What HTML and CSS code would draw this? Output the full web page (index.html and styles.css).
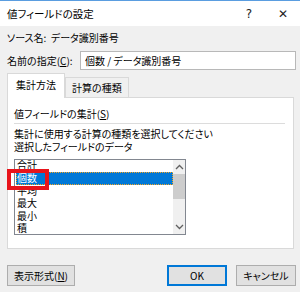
FILE: index.html
```html
<!DOCTYPE html>
<html lang="ja">
<head>
    <meta charset="UTF-8">
    <title>値フィールドの設定</title>
    <link rel="stylesheet" href="styles.css">
</head>
<body>
    <div class="dialog">
        <div class="titlebar">
            <span class="title">値フィールドの設定</span>
            <span class="help">?</span>
            <span class="close">✕</span>
        </div>
        <div class="content">
            <div class="source">ソース名:&nbsp;&nbsp;データ識別番号</div>
            <div class="name-row">
                <label for="name">名前の指定(<u>C</u>):</label>
                <input type="text" id="name" value="個数 / データ識別番号">
            </div>

            <div class="tabs">
                <div class="tab active">集計方法</div>
                <div class="tab">計算の種類</div>
            </div>
            <div class="panel">
                <div class="group-title">値フィールドの集計(<u>S</u>)</div>
                <div class="sep"></div>
                <div class="hint">集計に使用する計算の種類を選択してください</div>
                <div class="hint">選択したフィールドのデータ</div>
                <div class="listbox">
                    <div class="items">
                        <div class="item">合計</div>
                        <div class="item selected">個数</div>
                        <div class="item">平均</div>
                        <div class="item">最大</div>
                        <div class="item">最小</div>
                        <div class="item">積</div>
                    </div>
                    <div class="scrollbar">
                        <svg class="arrow" width="9" height="6" viewBox="0 0 9 6"><path d="M1 5 L4.5 1.5 L8 5" fill="none" stroke="#606060" stroke-width="1.3"/></svg>
                        <div class="track"><div class="thumb"></div></div>
                        <svg class="arrow" width="9" height="6" viewBox="0 0 9 6"><path d="M1 1 L4.5 4.5 L8 1" fill="none" stroke="#606060" stroke-width="1.3"/></svg>
                    </div>
                    <div class="mark"></div>
                </div>
            </div>

            <div class="buttons">
                <button class="btn">表示形式(<u>N</u>)</button>
                <span class="spacer"></span>
                <button class="btn default">OK</button>
                <button class="btn">キャンセル</button>
            </div>
        </div>
    </div>
</body>
</html>
```
FILE: styles.css
```css
html, body {
    margin: 0;
    padding: 0;
}
body {
    font-family: "Noto Sans CJK JP", "Noto Sans", sans-serif;
    font-size: 10px;
    font-feature-settings: "palt";
    color: #000;
    background: #f0f0f0;
}
.dialog {
    width: 300px;
    height: 292px;
    background: #f0f0f0;
    overflow: hidden;
}
.titlebar {
    height: 25px;
    background: #fff;
    border-top: 1px solid #5a9de0;
    display: flex;
    align-items: center;
    padding: 0 0 0 7px;
    font-size: 10.5px;
}
.title {
    flex: 1;
}
.help {
    width: 20px;
    text-align: center;
    font-family: "DejaVu Sans", sans-serif;
    font-size: 12px;
    color: #222;
    margin-right: 14px;
}
.close {
    width: 20px;
    text-align: center;
    font-family: "DejaVu Sans", sans-serif;
    font-size: 12px;
    color: #222;
    margin-right: 7px;
}
.content {
    padding: 4px 4px 0 7px;
}
.source {
    height: 16px;
    line-height: 16px;
}
.name-row {
    display: flex;
    align-items: center;
    height: 19px;
    margin-top: 5px;
}
.name-row label {
    width: 73px;
}
.name-row input {
    flex: 1;
    height: 19px;
    box-sizing: border-box;
    border: 1px solid #b8b8b8;
    font: inherit;
    font-feature-settings: "palt";
    padding: 0 4px;
    margin: 0;
}
.tabs {
    display: flex;
    align-items: flex-end;
    margin-top: 3px;
    height: 24px;
    position: relative;
    z-index: 1;
}
.tab {
    height: 19px;
    line-height: 19px;
    padding: 0 6px;
    border: 1px solid #d9d9d9;
    border-bottom: none;
    background: #f0f0f0;
}
.tab.active {
    height: 24px;
    line-height: 22px;
    background: #fff;
    border-color: #d9d9d9;
    padding: 0 8px;
    margin-bottom: -1px;
}
.panel {
    background: #fff;
    border: 1px solid #d9d9d9;
    width: 287px;
    height: 152px;
    box-sizing: border-box;
    padding: 8px 4px 0 6px;
}
.group-title {
    height: 16px;
    line-height: 16px;
}
.sep {
    height: 1px;
    background: #dcdcdc;
    margin: 1px 4px 3px 0;
}
.hint {
    height: 13px;
    line-height: 13px;
}
.listbox {
    margin-top: 6px;
    width: 172px;
    height: 76px;
    box-sizing: border-box;
    border: 1px solid #828790;
    display: flex;
    position: relative;
}
.items {
    flex: 1;
    overflow: hidden;
    padding-left: 1px;
}
.item {
    height: 12.4px;
    line-height: 12.4px;
    padding-left: 1px;
}
.item:first-child {
    line-height: 9px;
}
.item.selected {
    background: #0078d7;
    color: #fff;
    outline: 1px dotted #f5a623;
    outline-offset: -1px;
}
.scrollbar {
    width: 12px;
    background: #f0f0f0;
    display: flex;
    flex-direction: column;
    align-items: center;
}
.arrow {
    margin: 4px 0;
}
.track {
    flex: 1;
    width: 100%;
}
.thumb {
    width: 100%;
    height: 25px;
    background: #cdcdcd;
}
.mark {
    position: absolute;
    left: -8px;
    top: 9px;
    width: 34px;
    height: 13px;
    border: 4px solid #e8141b;
}
.buttons {
    display: flex;
    margin-top: 16px;
    gap: 9px;
}
.spacer {
    flex: 1;
}
.btn {
    width: 60px;
    height: 21px;
    box-sizing: border-box;
    background: #e1e1e1;
    border: 1px solid #adadad;
    font: inherit;
    font-feature-settings: "palt";
    padding: 0;
    margin: 0;
}
.btn:first-child {
    width: 68px;
}
.btn.default {
    border: 1px solid #0078d7;
    box-shadow: inset 0 0 0 1px #0078d7;
}
```
